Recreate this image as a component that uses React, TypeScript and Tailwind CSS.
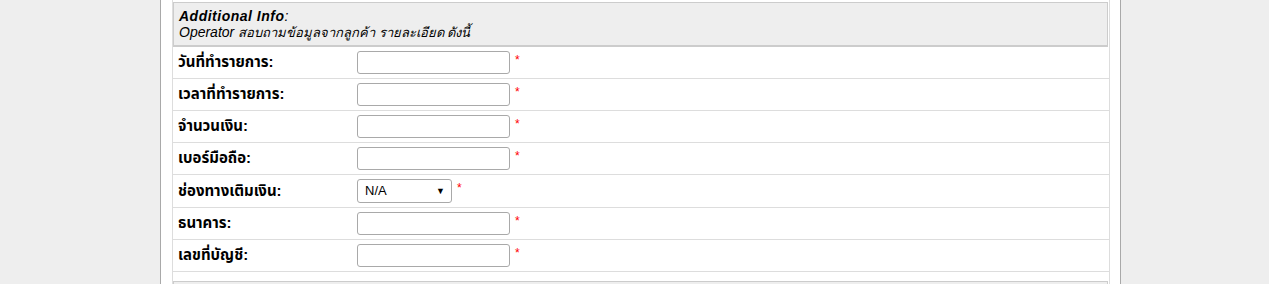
import React from "react";

const rows: { label: string; type: "input" | "select" }[] = [
  { label: "วันที่ทำรายการ:", type: "input" },
  { label: "เวลาที่ทำรายการ:", type: "input" },
  { label: "จำนวนเงิน:", type: "input" },
  { label: "เบอร์มือถือ:", type: "input" },
  { label: "ช่องทางเติมเงิน:", type: "select" },
  { label: "ธนาคาร:", type: "input" },
  { label: "เลขที่บัญชี:", type: "input" },
];

function Star() {
  return <span className="ml-[5px] -mt-[6px] text-[12px] leading-none text-[#ff0000]">*</span>;
}

export default function App() {
  return (
    <div className="min-h-screen bg-[#eeeeee] font-['Tahoma','Liberation_Sans','Noto_Sans_Thai',sans-serif] text-black">
      <div className="ml-[160px] w-[961px] h-[284px] overflow-hidden border-x border-[#a9a9a9] bg-white pl-[11px] pr-[10px]">
        <div className="h-full border-x border-[#dddddd] pt-[2px]">
          <div className="mr-[1px] h-[45px] border border-b-2 border-[#cccccc] bg-[#eeeeee] pl-[5px] pt-[5px] text-[14px] leading-[16px] italic font-['Liberation_Sans','Tahoma',sans-serif]">
            <div>
              <span className="font-bold tracking-[0.5px]">Additional Info</span>:
            </div>
            <div>
              Operator <span className="text-[13px]">สอบถามข้อมูลจากลูกค้า รายละเอียด ดังนี้</span>
            </div>
          </div>
          {rows.map((r) => (
            <div
              key={r.label}
              className={`flex items-center border-b border-[#dddddd] ${r.type === "select" ? "h-[33px]" : "h-[32px]"}`}
            >
              <div className="w-[184px] pl-[5px] text-[15px] font-bold">{r.label}</div>
              {r.type === "input" ? (
                <div className="h-[23px] w-[153px] rounded-[3px] border border-[#a9a9a9] bg-white" />
              ) : (
                <div className="flex h-[24px] w-[95px] items-center justify-between rounded-[3px] border border-[#a9a9a9] bg-white pl-[7px] pr-[6px] font-['Liberation_Sans',sans-serif] text-[13px]">
                  <span>N/A</span>
                  <span className="text-[9px] leading-none">▼</span>
                </div>
              )}
              <Star />
            </div>
          ))}
          <div className="h-[9px]" />
          <div className="mr-[1px] h-[40px] border border-[#cccccc] bg-[#eeeeee]" />
        </div>
      </div>
    </div>
  );
}
